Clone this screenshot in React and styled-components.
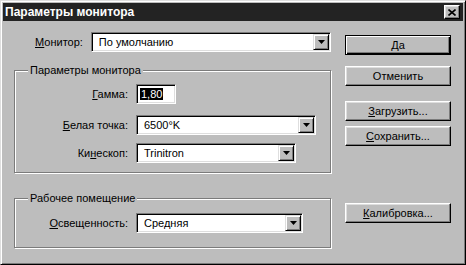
import React from "react";
import styled, { createGlobalStyle } from "styled-components";

const FACE = "#bdbdbd";
const SHADOW = "#7b7b7b";
const LIGHT = "#dedede";

const Global = createGlobalStyle`
  html, body { margin: 0; padding: 0; background: ${FACE}; }
  body { font-family: "Liberation Sans", Arial, sans-serif; font-size: 11px; color: #000; }
  * { box-sizing: border-box; }
`;

const Window = styled.div`
  width: 466px;
  height: 265px;
  background: ${FACE};
  border: 1px solid;
  border-color: ${LIGHT} #000 #000 ${LIGHT};
  box-shadow: inset 1px 1px 0 #fff, inset -1px -1px 0 ${SHADOW};
  padding: 2px;
  display: flex;
  flex-direction: column;
`;

const TitleBar = styled.div`
  height: 18px;
  background: #232323;
  color: #fff;
  font-weight: bold;
  font-size: 12px;
  display: flex;
  align-items: center;
  justify-content: space-between;
  padding: 0 3px 0 2px;
`;

const CloseBtn = styled.div`
  width: 16px;
  height: 14px;
  background: ${FACE};
  border: 1px solid;
  border-color: #fff #000 #000 #fff;
  box-shadow: inset -1px -1px 0 ${SHADOW}, inset 1px 1px 0 ${LIGHT};
  display: flex;
  align-items: center;
  justify-content: center;
`;

const Body = styled.div`
  flex: 1;
  display: flex;
  padding: 11px 0 0 11px;
`;

const LeftCol = styled.div`
  width: 317px;
  display: flex;
  flex-direction: column;
`;

const RightCol = styled.div`
  margin-left: 14px;
  width: 106px;
  display: flex;
  flex-direction: column;
`;

const TopRow = styled.div`
  display: flex;
  align-items: center;
  gap: 8px;
  padding-left: 21px;
  height: 20px;
`;

const Label = styled.span`
  white-space: nowrap;
  text-align: right;
`;

const Group = styled.div`
  position: relative;
  margin-top: ${(p) => p.$top}px;
  border: 1px solid ${SHADOW};
  box-shadow: inset 1px 1px 0 #fff, 1px 1px 0 #fff;
  padding: ${(p) => p.$pt}px 0 ${(p) => p.$pb}px 0;
  display: grid;
  grid-template-columns: 113px auto;
  column-gap: 8px;
  align-items: center;
  justify-items: start;
`;

const Caption = styled.span`
  position: absolute;
  top: -8px;
  left: 13px;
  padding: 0 2px;
  line-height: 14px;
  background: ${FACE};
  white-space: nowrap;
`;

const RowLabel = styled(Label)`
  justify-self: end;
  margin-top: ${(p) => p.$mt || 0}px;
`;

const Field = styled.div`
  width: ${(p) => p.$w}px;
  height: 20px;
  margin-top: ${(p) => p.$mt || 0}px;
  background: #fff;
  border: 1px solid;
  border-color: ${SHADOW} #fff #fff ${SHADOW};
  box-shadow: inset 1px 1px 0 #000, inset -1px -1px 0 ${LIGHT};
  padding: 1px 1px 1px 2px;
  display: flex;
  align-items: center;
`;

const FieldText = styled.span`
  flex: 1;
  padding-left: ${(p) => p.$pl ?? 5}px;
  white-space: nowrap;
  overflow: hidden;
`;

const Selected = styled.span`
  background: #000;
  color: #fff;
  padding: 1px 1px;
`;

const ArrowBtn = styled.div`
  width: 16px;
  height: 16px;
  background: ${FACE};
  border: 1px solid;
  border-color: ${LIGHT} #000 #000 ${LIGHT};
  box-shadow: inset 1px 1px 0 #fff, inset -1px -1px 0 ${SHADOW};
  display: flex;
  align-items: center;
  justify-content: center;
`;

const Button = styled.div`
  height: 20px;
  margin-top: ${(p) => p.$mt || 0}px;
  background: ${FACE};
  border: 1px solid;
  border-color: ${(p) => (p.$default ? "#000" : "#fff #000 #000 #fff")};
  box-shadow: ${(p) =>
    p.$default
      ? `inset 1px 1px 0 #fff, inset -1px -1px 0 #000, inset -2px -2px 0 ${SHADOW}`
      : `inset -1px -1px 0 ${SHADOW}, inset 1px 1px 0 ${LIGHT}`};
  display: flex;
  align-items: center;
  justify-content: center;
  white-space: nowrap;
`;

const Arrow = () => (
  <svg width="7" height="4" viewBox="0 0 7 4">
    <path d="M0 0h7L3.5 4z" fill="#000" />
  </svg>
);

const Combo = ({ w, mt, children }) => (
  <Field $w={w} $mt={mt}>
    <FieldText>{children}</FieldText>
    <ArrowBtn>
      <Arrow />
    </ArrowBtn>
  </Field>
);

export default function App() {
  return (
    <>
      <Global />
      <Window>
        <TitleBar>
          <span>Параметры монитора</span>
          <CloseBtn>
            <svg width="8" height="7" viewBox="0 0 8 7">
              <path d="M0.5 0.5L7.5 6.5M7.5 0.5L0.5 6.5" stroke="#000" strokeWidth="1.6" />
            </svg>
          </CloseBtn>
        </TitleBar>
        <Body>
          <LeftCol>
            <TopRow>
              <Label>
                <u>М</u>онитор:
              </Label>
              <Combo w={243}>По умолчанию</Combo>
            </TopRow>
            <Group $top={18} $pt={13} $pb={9}>
              <Caption>Параметры монитора</Caption>
              <RowLabel>
                <u>Г</u>амма:
              </RowLabel>
              <Field $w={40}>
                <FieldText $pl={1}>
                  <Selected>1,80</Selected>
                </FieldText>
              </Field>
              <RowLabel $mt={11}>
                <u>Б</u>елая точка:
              </RowLabel>
              <Combo w={180} mt={11}>6500°K</Combo>
              <RowLabel $mt={8}>
                Ки<u>н</u>ескоп:
              </RowLabel>
              <Combo w={160} mt={8}>Trinitron</Combo>
            </Group>
            <Group $top={25} $pt={14} $pb={14}>
              <Caption>Рабочее помещение</Caption>
              <RowLabel>
                <u>О</u>свещенность:
              </RowLabel>
              <Combo w={167}>Средняя</Combo>
            </Group>
          </LeftCol>
          <RightCol>
            <Button $default $mt={3}>Да</Button>
            <Button $mt={11}>Отменить</Button>
            <Button $mt={15}>
              <span>
                <u>З</u>агрузить...
              </span>
            </Button>
            <Button $mt={5}>
              <span>
                <u>С</u>охранить...
              </span>
            </Button>
            <Button $mt={57}>
              <span>
                <u>К</u>алибровка...
              </span>
            </Button>
          </RightCol>
        </Body>
      </Window>
    </>
  );
}
